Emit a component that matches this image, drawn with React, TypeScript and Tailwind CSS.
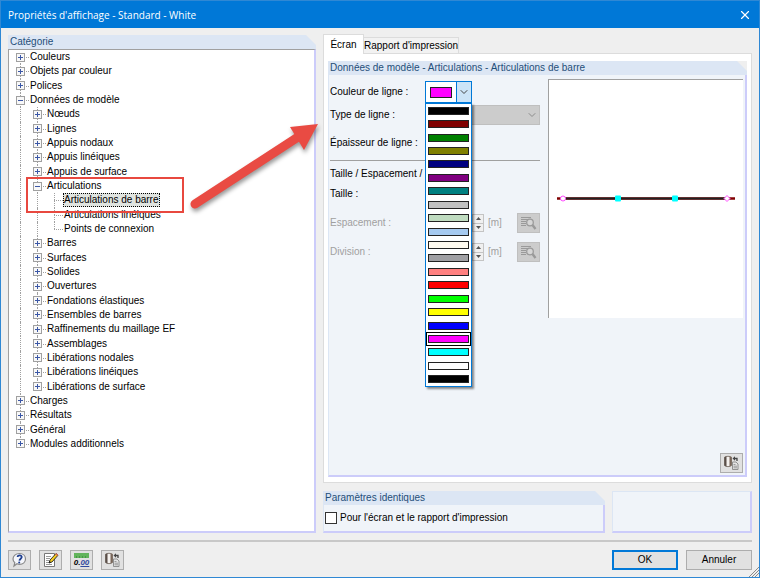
import { useState } from 'react'
import type { ReactNode } from 'react'
import { ChevronDown, X } from 'lucide-react'

type NodeState = 'closed' | 'open' | 'leaf'

interface TreeRow {
  label: string
  depth: number
  state: NodeState
}

const TREE: TreeRow[] = [
  { label: 'Couleurs', depth: 0, state: 'closed' },
  { label: 'Objets par couleur', depth: 0, state: 'closed' },
  { label: 'Polices', depth: 0, state: 'closed' },
  { label: 'Données de modèle', depth: 0, state: 'open' },
  { label: 'Nœuds', depth: 1, state: 'closed' },
  { label: 'Lignes', depth: 1, state: 'closed' },
  { label: 'Appuis nodaux', depth: 1, state: 'closed' },
  { label: 'Appuis linéiques', depth: 1, state: 'closed' },
  { label: 'Appuis de surface', depth: 1, state: 'closed' },
  { label: 'Articulations', depth: 1, state: 'open' },
  { label: 'Articulations de barre', depth: 2, state: 'leaf' },
  { label: 'Articulations linéiques', depth: 2, state: 'leaf' },
  { label: 'Points de connexion', depth: 2, state: 'leaf' },
  { label: 'Barres', depth: 1, state: 'closed' },
  { label: 'Surfaces', depth: 1, state: 'closed' },
  { label: 'Solides', depth: 1, state: 'closed' },
  { label: 'Ouvertures', depth: 1, state: 'closed' },
  { label: 'Fondations élastiques', depth: 1, state: 'closed' },
  { label: 'Ensembles de barres', depth: 1, state: 'closed' },
  { label: 'Raffinements du maillage EF', depth: 1, state: 'closed' },
  { label: 'Assemblages', depth: 1, state: 'closed' },
  { label: 'Libérations nodales', depth: 1, state: 'closed' },
  { label: 'Libérations linéiques', depth: 1, state: 'closed' },
  { label: 'Libérations de surface', depth: 1, state: 'closed' },
  { label: 'Charges', depth: 0, state: 'closed' },
  { label: 'Résultats', depth: 0, state: 'closed' },
  { label: 'Général', depth: 0, state: 'closed' },
  { label: 'Modules additionnels', depth: 0, state: 'closed' },
]

const COLORS = [
  '#000000', '#800000', '#008000', '#808000', '#000080', '#800080', '#008080',
  '#c0c0c0', '#c0dcc0', '#a6caf0', '#fffbf0', '#a0a0a4', '#ff8080', '#ff0000',
  '#00ff00', '#ffff00', '#0000ff', '#ff00ff', '#00ffff', '#ffffff', '#000000',
]

// true si la ligne verticale du niveau continue sous la rangée
function continues(index: number, level: number) {
  for (let i = index + 1; i < TREE.length; i++) {
    if (TREE[i].depth < level) return false
    if (TREE[i].depth === level) return true
  }
  return false
}

function Guide({ index, level }: { index: number; level: number }) {
  const row = TREE[index]
  const own = row.depth === level
  const below = continues(index, level)
  return (
    <span className="relative flex w-[17px] shrink-0 items-center justify-center self-stretch">
      {own && index > 0 && <span className="absolute top-0 left-2 h-1/2 border-l border-dotted border-[#a0a0a0]" />}
      {own && below && <span className="absolute bottom-0 left-2 h-1/2 border-l border-dotted border-[#a0a0a0]" />}
      {!own && below && <span className="absolute inset-y-0 left-2 border-l border-dotted border-[#a0a0a0]" />}
      {own && <span className="absolute top-1/2 right-0 left-2 border-t border-dotted border-[#a0a0a0]" />}
      {own && row.state !== 'leaf' && (
        <svg className="relative size-[9px]" viewBox="0 0 9 9" shapeRendering="crispEdges">
          <rect x="0.5" y="0.5" width="8" height="8" fill="#f8f8f8" stroke="#a0a0a0" />
          <path d={row.state === 'open' ? 'M2 4.5h5' : 'M2 4.5h5M4.5 2v5'} stroke="#3b57a6" />
        </svg>
      )}
    </span>
  )
}

function GroupTitle({ children }: { children: ReactNode }) {
  return (
    <div className="bg-[#efefef]">
      <h2 className="h-[14px] bg-[#dce6f4] pl-0.5 leading-[14px] text-[#1f4e79] [clip-path:polygon(0_0,calc(100%-10px)_0,100%_10px,100%_100%,0_100%)]">
        {children}
      </h2>
    </div>
  )
}

function IconButton({ label, disabled, children }: { label: string; disabled?: boolean; children: ReactNode }) {
  return (
    <button
      type="button"
      aria-label={label}
      disabled={disabled}
      className="flex h-5 w-[23px] shrink-0 items-center justify-center border border-[#adadad] bg-[#e1e1e1] disabled:border-[#bfbfbf] disabled:bg-[#cccccc]"
    >
      {children}
    </button>
  )
}

function CopyIcon() {
  return (
    <svg className="h-4 w-[17px]" viewBox="0 0 17 16">
      <path d="M1.500 2.200C3 1 7 1 8.500 2.200v8.300C7 12 3 12 1.500 10.500z" fill="#f4f1ee" stroke="#6b5f57" strokeWidth=".8" />
      <path d="M1.500 2.200C2 1.700 2.700 1.500 3.500 1.400v10c-.8-.1-1.500-.4-2-.9z" fill="#5a4f49" />
      <path d="M6.500 1.400c.8.100 1.500.4 2 .8v8.300c-.5.500-1.200.8-2 .9z" fill="#7a675a" />
      <path d="M11 3.500h3v2.500" fill="none" stroke="#444" strokeWidth="1.300" />
      <path d="M12 1.200L9.500 3.500l2.500 2.300" fill="#444" />
      <path d="M9.500 7h3.500l2 2v5.500H9.500z" fill="#e4e4e4" stroke="#888" strokeWidth=".9" />
      <path d="M10.500 9.500h2M10.500 11.200h3.500M10.500 12.800h3.500" stroke="#888" strokeWidth=".8" />
    </svg>
  )
}

function SearchIcon() {
  return (
    <svg className="h-4 w-[17px]" viewBox="0 0 17 16" fill="none" stroke="#9a9a9a">
      <path d="M1 2.500h10M1 4.500h7M1 6.500h5M1 8.500h5M1 10.500h5" />
      <circle cx="10" cy="7.500" r="3.300" fill="#d6d6d6" strokeWidth="1.300" />
      <path d="M12.500 10l3 4" strokeWidth="2.400" />
    </svg>
  )
}

function SpinRow({ id, label }: { id: string; label: string }) {
  return (
    <div className="flex h-5 items-center text-[#a0a0a0]">
      <label htmlFor={id} className="w-[95px] shrink-0">{label}</label>
      <div className="flex h-[18px] w-[59px] shrink-0">
        <input id={id} disabled className="w-0 flex-1 border border-[#cccccc] bg-[#f0f0f0]" />
        <div className="flex w-3 flex-col">
          <button type="button" disabled aria-label={`Augmenter ${label}`} className="flex flex-1 items-center justify-center border border-[#c4c4c4] bg-[#f0f0f0]">
            <svg className="h-[3px] w-[5px]" viewBox="0 0 5 3"><path d="M0 3L2.500 0 5 3z" fill="#555" /></svg>
          </button>
          <button type="button" disabled aria-label={`Diminuer ${label}`} className="flex flex-1 items-center justify-center border border-t-0 border-[#c4c4c4] bg-[#f0f0f0]">
            <svg className="h-[3px] w-[5px]" viewBox="0 0 5 3"><path d="M0 0h5L2.500 3z" fill="#555" /></svg>
          </button>
        </div>
      </div>
      <span className="flex-1 pl-1">[m]</span>
      <IconButton label={`Choisir ${label}`} disabled>
        <SearchIcon />
      </IconButton>
    </div>
  )
}

function ColorPicker() {
  const [open, setOpen] = useState(true)
  const [selected, setSelected] = useState(17)

  return (
    <div className="relative">
      <button
        id="couleur"
        type="button"
        aria-haspopup="listbox"
        aria-expanded={open}
        onClick={() => setOpen(!open)}
        className="flex h-[22px] w-[47px] border border-[#0078d7] bg-white"
      >
        <span className="flex flex-1 items-center justify-center self-stretch">
          <span className="h-[11px] w-[22px] border border-[#222222]" style={{ backgroundColor: COLORS[selected] }} />
        </span>
        <span className="flex w-[15px] items-center justify-center self-stretch border-l border-[#0078d7] bg-[#cce4f7]">
          <ChevronDown className="size-3 text-[#444444]" strokeWidth={2} />
        </span>
      </button>
      {open && (
        <ul
          role="listbox"
          aria-label="Couleur de ligne"
          className="absolute top-[22px] left-0 z-10 grid h-[284px] w-[47px] auto-rows-fr border border-[#0078d7] bg-white shadow-[2px_2px_2px_rgba(0,0,0,0.45)]"
        >
          {COLORS.map((color, i) => (
            <li key={i} role="option" aria-selected={i === selected} className="flex">
              <button
                type="button"
                aria-label={color}
                onClick={() => {
                  setSelected(i)
                  setOpen(false)
                }}
                className={`flex flex-1 items-center justify-center border ${i === selected ? 'border-black' : 'border-transparent'}`}
              >
                <span className="h-2 w-[41px] border border-[#222222]" style={{ backgroundColor: color }} />
              </button>
            </li>
          ))}
        </ul>
      )}
    </div>
  )
}

function CategoryTree() {
  const [current, setCurrent] = useState('Articulations de barre')

  return (
    <div className="relative flex-1 border-t border-r-2 border-b-2 border-l border-t-[#a0a0a0] border-r-[#ccccfa] border-b-[#ccccfa] border-l-[#a0a0a0] bg-white pl-[3px]">
      <ul role="tree" aria-label="Catégorie" className="grid h-[401px] auto-rows-fr">
        {TREE.map((row, i) => (
          <li key={row.label} role="treeitem" aria-selected={row.label === current} className="flex items-center">
            {Array.from({ length: row.depth + 1 }, (_, level) => (
              <Guide key={level} index={i} level={level} />
            ))}
            <button
              type="button"
              onClick={() => setCurrent(row.label)}
              className={`h-[14px] leading-3 whitespace-nowrap border ${row.label === current ? 'border-dotted border-black bg-[#e0e4e0]' : 'border-transparent'}`}
            >
              {row.label}
            </button>
          </li>
        ))}
      </ul>

      {/* Cadre et flèche de repérage */}
      <div className="pointer-events-none absolute top-[127px] left-[17px] h-9 w-[158px] border-2 border-[#e8483f]" />
      <svg className="pointer-events-none absolute top-[66px] left-[176px] z-10 h-[100px] w-[140px] drop-shadow-[1px_3px_2px_rgba(0,0,0,0.4)]" viewBox="0 0 140 100">
        <path d="M10 88L113 21" stroke="#e94b43" strokeWidth="9" strokeLinecap="round" />
        <path d="M133 8L105 11l14 23z" fill="#e94b43" />
      </svg>
    </div>
  )
}

function Preview() {
  return (
    <div className="flex h-[239px] flex-1 border-t border-l border-[#a0a0a0] bg-white">
      <svg className="size-full" viewBox="0 0 194 238">
        <path d="M8 118.500h178" stroke="#800000" strokeWidth="2.500" />
        <path d="M14 118.500h164" stroke="#222" strokeWidth="2" />
        <circle cx="14" cy="118.500" r="2.500" fill="#fff" stroke="#ff4cff" />
        <rect x="66" y="115.500" width="6" height="6" rx="1" fill="#0ff" />
        <rect x="123" y="115.500" width="6" height="6" rx="1" fill="#0ff" />
        <path d="M178 115.500l3 3-3 3-3-3z" fill="#fff" stroke="#ff4cff" />
      </svg>
    </div>
  )
}

export default function App() {
  const [tab, setTab] = useState('ecran')

  return (
    <div className="relative flex min-h-screen flex-col border border-[#2f88d4] bg-[#efefef] font-['Liberation_Sans',sans-serif] text-[10px] leading-[14px] text-black">
      <header className="flex h-[27px] shrink-0 items-center justify-between bg-[#0078d7] pr-[7px] pl-[7px] text-white">
        <h1 className="font-['Open_Sans',sans-serif] text-[10px]">Propriétés d'affichage - Standard - White</h1>
        <button type="button" aria-label="Fermer">
          <X className="size-[14px]" strokeWidth={2} />
        </button>
      </header>

      <main className="flex flex-1 gap-[7px] px-[7px] pt-[7px]">
        <section className="flex w-[308px] shrink-0 flex-col">
          <GroupTitle>Catégorie</GroupTitle>
          <CategoryTree />
        </section>

        <section className="flex min-w-0 flex-1 flex-col">
          <div role="tablist" className="flex h-[18px] items-end">
            <button
              type="button"
              role="tab"
              aria-selected={tab === 'ecran'}
              onClick={() => setTab('ecran')}
              className="relative z-10 -mb-px h-5 w-[41px] border border-b-0 border-[#dcdcdc] bg-white"
            >
              Écran
            </button>
            <button
              type="button"
              role="tab"
              aria-selected={tab === 'rapport'}
              onClick={() => setTab('rapport')}
              className="h-4 w-[95px] border border-b-0 border-l-0 border-[#dcdcdc] bg-[#f2f2f2] whitespace-nowrap"
            >
              Rapport d'impression
            </button>
          </div>

          <div className="flex flex-1 flex-col border border-[#dcdcdc] bg-white px-1 pt-[7px] pb-[5px]">
            <GroupTitle>Données de modèle - Articulations - Articulations de barre</GroupTitle>
            <div className="flex flex-1 flex-col border-r-2 border-b-2 border-l border-r-[#ccccfa] border-b-[#ccccfa] border-l-[#dce6f4] bg-[#f0f4f9] pt-1 pr-0.5 pb-0.5 pl-px">
              <div className="flex gap-2">
                <div className="flex w-[210px] shrink-0 flex-col pt-0.5">
                  <div className="flex h-[22px] items-center">
                    <label htmlFor="couleur" className="w-[95px] shrink-0">Couleur de ligne :</label>
                    <ColorPicker />
                  </div>
                  <div className="mt-0.5 flex h-5 items-center">
                    <label htmlFor="type" className="w-[95px] shrink-0">Type de ligne :</label>
                    <div className="relative flex-1">
                      <select id="type" disabled className="block h-5 w-full appearance-none border border-[#bfbfbf] bg-[#cccccc] opacity-100" />
                      <ChevronDown className="absolute top-1 right-0.5 size-3 text-[#8c8c8c]" strokeWidth={2} />
                    </div>
                  </div>
                  <div className="mt-2 flex h-5 items-center">
                    <label htmlFor="epaisseur" className="w-[95px] shrink-0">Épaisseur de ligne :</label>
                    <input id="epaisseur" className="h-[18px] w-11 border border-[#adadad] bg-white" />
                  </div>
                  <hr className="mt-[7px] border-[#a0a0a0]" />
                  <h3 className="mt-1.5">Taille / Espacement /</h3>
                  <div className="mt-[3px] flex h-5 items-center">
                    <label htmlFor="taille" className="w-[95px] shrink-0">Taille :</label>
                    <input id="taille" className="h-[18px] w-11 border border-[#adadad] bg-white" />
                  </div>
                  <div className="mt-[9px] flex flex-col gap-[9px]">
                    <SpinRow id="espacement" label="Espacement :" />
                    <SpinRow id="division" label="Division :" />
                  </div>
                </div>
                <Preview />
              </div>
              <div className="mt-auto flex justify-end">
                <IconButton label="Copier les paramètres">
                  <CopyIcon />
                </IconButton>
              </div>
            </div>
          </div>

          <div className="mt-2 flex gap-[7px]">
            <div className="flex w-[282px] shrink-0 flex-col">
              <GroupTitle>Paramètres identiques</GroupTitle>
              <div className="flex h-7 items-center border-r-2 border-b-2 border-l border-r-[#ccccfa] border-b-[#ccccfa] border-l-[#dce6f4] bg-[#f0f4f9] pl-px">
                <label className="flex items-center gap-[3px]">
                  <input type="checkbox" className="size-3 appearance-none border border-[#333333] bg-white checked:bg-[#0078d7]" />
                  Pour l'écran et le rapport d'impression
                </label>
              </div>
            </div>
            <div className="flex-1 border-t border-r-2 border-b-2 border-l border-t-[#dce6f4] border-r-[#ccccfa] border-b-[#ccccfa] border-l-[#dce6f4] bg-[#f0f4f9]" />
          </div>
        </section>
      </main>

      <footer className="mx-[7px] mt-[7px] flex h-[37px] shrink-0 items-center justify-between border-t-2 border-[#c8c8c8]">
        <div className="flex gap-2">
          <IconButton label="Aide">
            <svg className="h-4 w-[17px]" viewBox="0 0 17 16">
              <path d="M8.500 1.500c3.800 0 6 2.500 6 5.500s-2.500 5.300-6 5.300c-1 0-1.800-.2-2.500-.5L3 14l.8-3.300C2.600 9.700 2 8.400 2 7c0-3 2.700-5.500 6.500-5.500z" fill="#f4f6fb" stroke="#888" strokeWidth="1.200" />
              <path d="M6.500 5c.3-2.400 4.500-2.200 4.200.2-.2 1.500-2 1.600-2.300 3.500" fill="none" stroke="#1f3f8f" strokeWidth="1.800" />
              <circle cx="8.200" cy="10.500" r="1" fill="#1f3f8f" />
            </svg>
          </IconButton>
          <IconButton label="Commentaire">
            <svg className="h-4 w-[17px]" viewBox="0 0 17 16">
              <path d="M2.500 1.500h10v13h-10z" fill="#fff" stroke="#777" />
              <path d="M4 4.500h5M4 6.500h4M4 8.500h3M4 10.500h3M4 12.500h6" stroke="#999" />
              <path d="M7 11l1-3 6-6.500 2 1.800-6 6.700z" fill="#f5cd1f" stroke="#222" strokeWidth=".9" />
              <path d="M7 11l.6-2 1.500 1.300z" fill="#111" />
              <path d="M13.200 2.300l1-1 1.900 1.700-1 1z" fill="#e36a4a" />
            </svg>
          </IconButton>
          <IconButton label="Unités et décimales">
            <span className="flex w-[17px] flex-col items-center text-[8px] leading-[9px] font-bold italic">
              <svg className="h-[5px] w-[15px]" viewBox="0 0 15 5">
                <rect width="15" height="5" fill="#62b45c" />
                <path d="M2.500 3v2M5.500 3v2M8.500 3v2M11.500 3v2" stroke="#3f8f40" strokeWidth=".8" />
              </svg>
              <span>0.<span className="text-[#2f4aa0] underline">00</span></span>
            </span>
          </IconButton>
          <IconButton label="Copier l'affichage">
            <CopyIcon />
          </IconButton>
        </div>
        <div className="flex gap-2">
          <button type="button" className="h-5 w-[66px] border-2 border-[#0078d7] bg-[#e1e1e1] leading-4">OK</button>
          <button type="button" className="h-5 w-[66px] border border-[#adadad] bg-[#e1e1e1]">Annuler</button>
        </div>
      </footer>

      <svg className="absolute right-0 bottom-0 size-2.5" viewBox="0 0 10 10" stroke="#8a8a8a">
        <path d="M0 10L10 0M3 10l7-7M6 10l4-4" />
      </svg>
    </div>
  )
}
